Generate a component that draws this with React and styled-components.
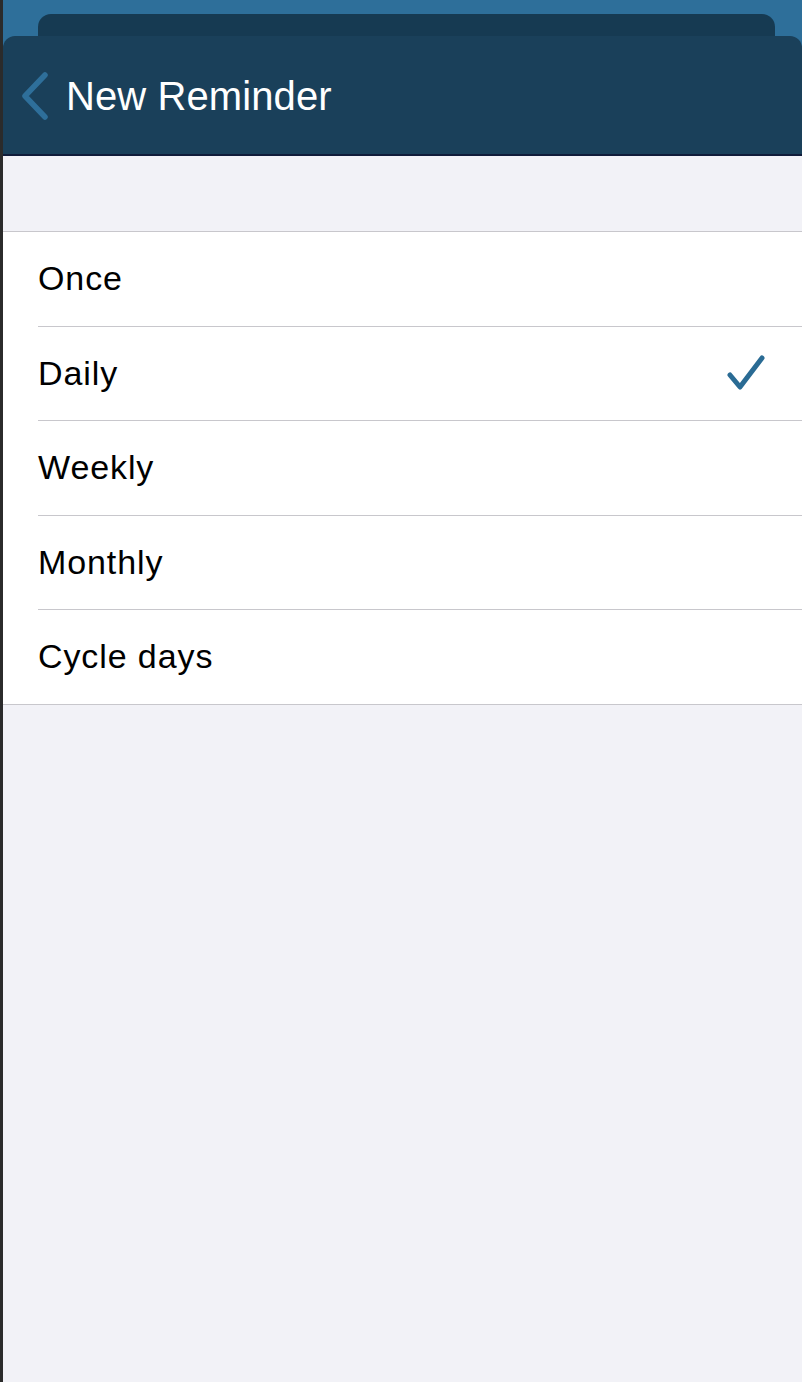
import React, { useState } from "react";
import styled, { createGlobalStyle } from "styled-components";

const GlobalStyle = createGlobalStyle`
    html, body {
        margin: 0;
        padding: 0;
        background: #2b2b2b;
    }
    body {
        font-family: "Liberation Sans", Arial, sans-serif;
        -webkit-font-smoothing: antialiased;
    }
`

const Screen = styled.div`
    margin-left: 3px;
    min-height: 1382px;
    display: flex;
    flex-direction: column;
    background: #f2f2f7;
`

const SheetStack = styled.div`
    background: #2e6f9a;
    padding-top: 14px;
`

const BackSheet = styled.div`
    margin: 0 27px 0 35px;
    height: 22px;
    background: #163a52;
    border-radius: 13px 13px 0 0;
`

const NavBar = styled.header`
    height: 120px;
    background: #1a405a;
    border-radius: 12px 12px 0 0;
    border-bottom: 2px solid #101c3a;
    display: flex;
    align-items: center;
    gap: 16px;
    padding: 2px 0 0 17px;
    box-sizing: border-box;
`

const BackButton = styled.button`
    display: flex;
    align-items: center;
    padding: 0;
    border: none;
    background: none;
    cursor: pointer;
`

const Title = styled.h1`
    margin: 0;
    color: #fff;
    font-size: 40px;
    font-weight: 400;
    letter-spacing: 0.1px;
`

const Spacer = styled.div`
    height: 75px;
`

const List = styled.ul`
    list-style: none;
    margin: 0;
    padding: 0 0 0 35px;
    background: #fff;
    border-top: 1px solid #c8c7cc;
    border-bottom: 1px solid #c8c7cc;
`

const Row = styled.li`
    height: 93.5px;
    display: flex;
    align-items: center;
    justify-content: space-between;
    padding-right: 36px;
    border-bottom: 1px solid ${({ $last }) => ($last ? "transparent" : "#c8c7cc")};
    margin-bottom: ${({ $last }) => ($last ? "-1px" : "0")};
    cursor: pointer;
`

const Label = styled.span`
    font-size: 34px;
    letter-spacing: 0.9px;
    color: #000;
`

const Chevron = () => (
    <svg width="30" height="48" viewBox="0 0 30 48" fill="none">
        <path d="M25 3 L5 24 L25 45" stroke="#2e6f9a" strokeWidth="5.5" strokeLinecap="round" strokeLinejoin="round" />
    </svg>
)

const Check = () => (
    <svg width="40" height="38" viewBox="0 0 40 38" fill="none">
        <path d="M4 21 L14 33 L36 4" stroke="#2a6b94" strokeWidth="5" strokeLinecap="round" strokeLinejoin="round" />
    </svg>
)

const options = ["Once", "Daily", "Weekly", "Monthly", "Cycle days"];

const App = () => {
    const [selected, setSelected] = useState("Daily");

    return <>
        <GlobalStyle />
        <Screen>
            <SheetStack>
                <BackSheet />
                <NavBar>
                    <BackButton aria-label="Back"><Chevron /></BackButton>
                    <Title>New Reminder</Title>
                </NavBar>
            </SheetStack>
            <Spacer />
            <List>
                {options.map((option, i) => (
                    <Row key={option} $last={i === options.length - 1} onClick={() => setSelected(option)}>
                        <Label>{option}</Label>
                        {selected === option && <Check />}
                    </Row>
                ))}
            </List>
        </Screen>
    </>
}

export default App;
